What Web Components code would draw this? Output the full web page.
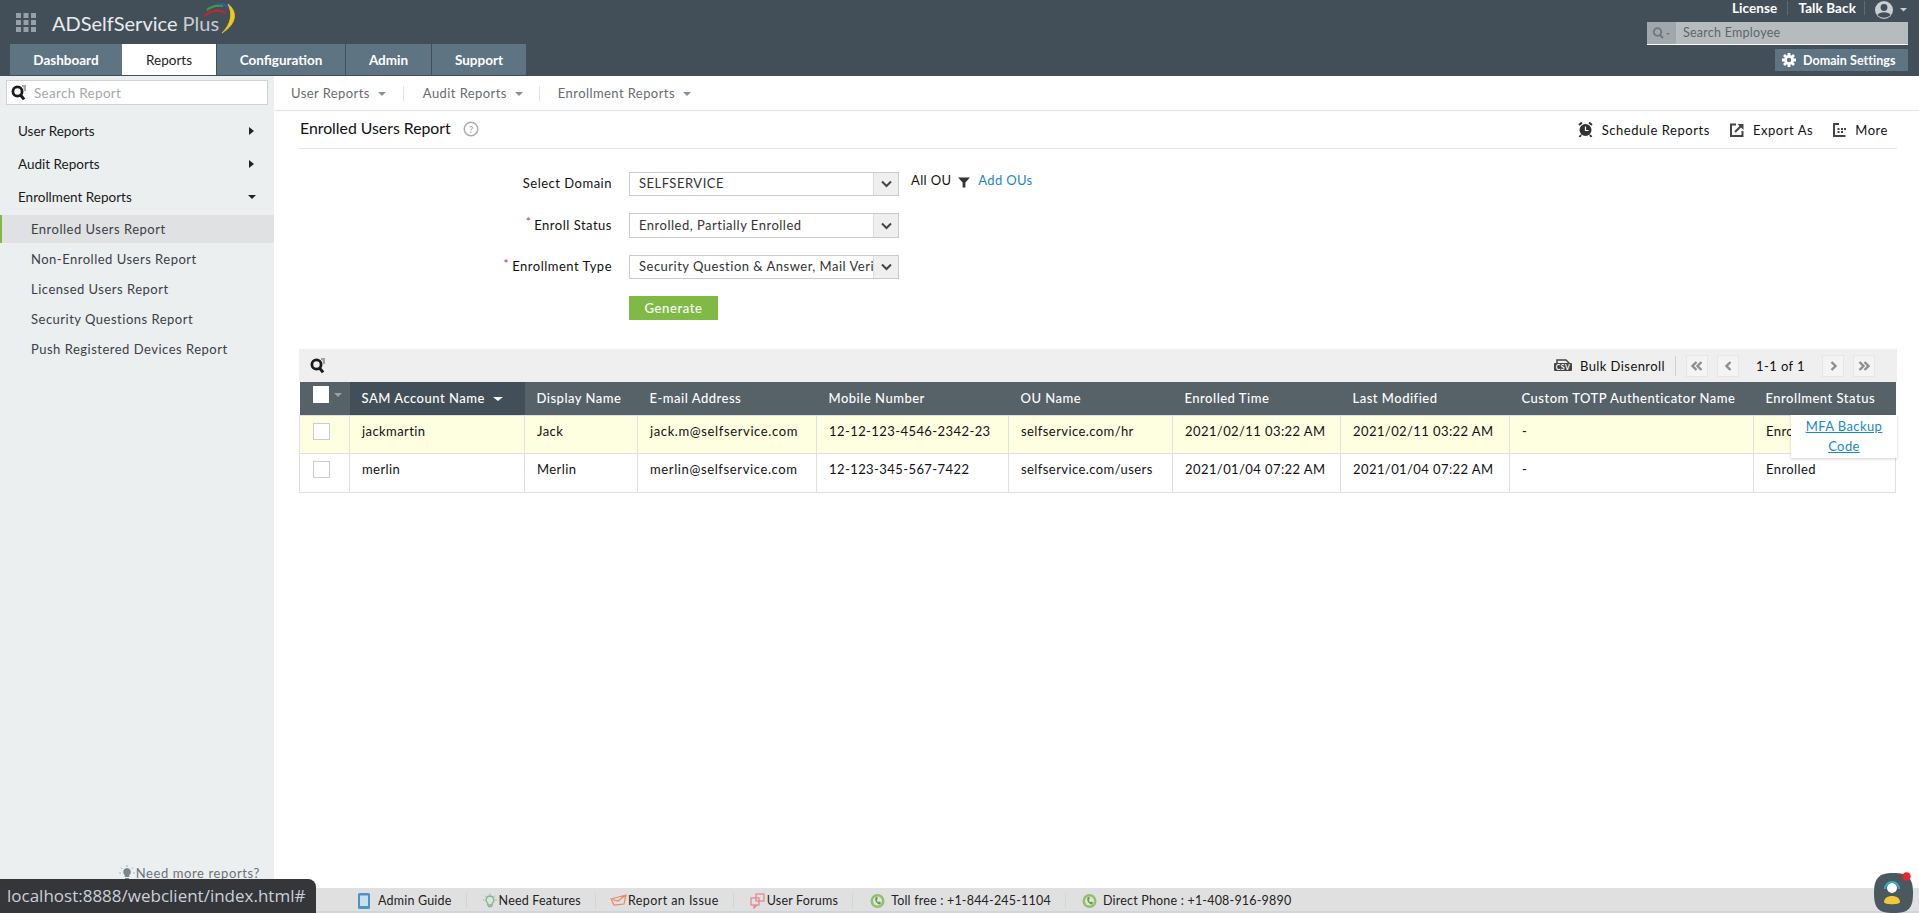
<!DOCTYPE html>
<html>
<head>
<meta charset="utf-8">
<title>ADSelfService Plus</title>
<style>
  html, body { margin: 0; height: 100%; overflow: hidden; background: #fff; }
  body { font: 13px Lato, "Liberation Sans", sans-serif; color: #111; }
  #app { display: flex; flex-direction: column; height: 913px; }
  #main { display: flex; flex: 1; min-height: 0; }
  #content { flex: 1; min-width: 0; }
</style>
</head>
<body>
<div id="app">
  <ad-header></ad-header>
  <div id="main">
    <ad-sidebar></ad-sidebar>
    <div id="content">
      <ad-subnav></ad-subnav>
      <ad-title></ad-title>
      <ad-form></ad-form>
      <ad-table></ad-table>
    </div>
  </div>
  <ad-footer></ad-footer>
</div>
<ad-statusbar>localhost:8888/webclient/index.html#</ad-statusbar>
<ad-chat></ad-chat>

<script>
const SEARCH_ICON = `<svg width="17" height="17" viewBox="0 0 17 17"><circle cx="6.5" cy="7.5" r="4.6" fill="none" stroke="#1b1b1b" stroke-width="2.8"/><path d="M9.5 11l3.6 4.4" stroke="#1b1b1b" stroke-width="3"/><path d="M11 2h4M12.500 4h2.500M13 6h2" stroke="#555" stroke-width="1"/></svg>`;

class AdHeader extends HTMLElement {
  constructor() {
    super();
    this.attachShadow({ mode: 'open' });
    const tabs = [['Dashboard', 112], ['Reports', 94, 1], ['Configuration', 128], ['Admin', 85], ['Support', 94]];
    this.shadowRoot.innerHTML = `
      <style>
        :host { display: flex; justify-content: space-between; height: 76px; background: #434f58; flex: none; }
        .left { display: flex; flex-direction: column; }
        .logo { height: 44px; display: flex; align-items: center; padding-left: 16px; position: relative; }
        .logo .name { font-size: 20px; color: #e8ecee; margin-left: 16px; margin-top: 2px; }
        .logo .name span { color: #c6ccd0; }
        .logo .arc { position: absolute; left: 204px; top: 3px; }
        .tabs { display: flex; gap: 1px; padding-left: 10px; }
        .tab { height: 31px; background: #5f7482; color: #fff; font-size: 13.5px; font-weight: 700; display: flex; align-items: center; justify-content: center; }
        .tab.on { background: #fff; color: #222; font-weight: 400; margin-left: -1px; }
        .right { display: flex; flex-direction: column; align-items: flex-end; padding-right: 11px; }
        .links { display: flex; align-items: center; height: 16px; margin-bottom: 6px; color: #fff; font-size: 13.5px; font-weight: 700; letter-spacing: .1px; }
        .links .sep { width: 1px; height: 14px; background: #5c6a74; margin: 0 10px; }
        .links svg { display: block; margin: 3px 0 0 9px; }
        .search { display: flex; width: 261px; height: 22px; background: #b6bbbe; border-bottom: 1px solid #fff; }
        .search .ic { width: 29px; background: #a0a8ae; display: flex; align-items: center; justify-content: center; }
        .search .txt { padding-left: 7px; color: #5d656b; font-size: 12.5px; letter-spacing: .25px; line-height: 22px; }
        .domain { display: flex; align-items: center; margin-top: 4px; width: 133px; height: 22px; box-sizing: border-box; padding-left: 7px; background: #5f7482; color: #fff; font-size: 12.5px; font-weight: 700; letter-spacing: .05px; }
        .domain svg { margin-right: 7px; }
      </style>
      <div class="left">
        <div class="logo">
          <svg width="20" height="19" viewBox="0 0 20 19" fill="#96a0a7"><rect width="5" height="5"/><rect x="7.5" width="5" height="5"/><rect x="15" width="5" height="5"/><rect y="7" width="5" height="5"/><rect x="7.5" y="7" width="5" height="5"/><rect x="15" y="7" width="5" height="5"/><rect y="14" width="5" height="5"/><rect x="7.500" y="14" width="5" height="5"/><rect x="15" y="14" width="5" height="5"/></svg>
          <div class="name">ADSelfService <span>Plus</span></div>
          <svg class="arc" width="33" height="31" viewBox="0 0 33 31" fill="none">
            <path d="M1 13C6 7 15 6 22 10" stroke="#c4262e" stroke-width="2.2"/>
            <path d="M3 7C8 3 14 2 19 3" stroke="#3f9a46" stroke-width="2.2"/>
            <path d="M13 1C19 0 25 3 28 9" stroke="#2b5ea8" stroke-width="2.2"/>
            <path d="M24 1C33 8 34 20 18 30C27 21 29 11 24 1Z" fill="#f1c916" stroke="#f1c916" stroke-width=".8"/>
          </svg>
        </div>
        <div class="tabs">
          ${tabs.map(t => `<div class="tab ${t[2] ? 'on' : ''}" style="width:${t[1]}px">${t[0]}</div>`).join('')}
        </div>
      </div>
      <div class="right">
        <div class="links">
          <span>License</span><span class="sep"></span><span>Talk Back</span><span class="sep" style="margin:0 0 0 8px"></span>
          <svg width="34" height="20" viewBox="0 0 34 20"><circle cx="10" cy="10" r="9" fill="#c9ced1"/><circle cx="10" cy="7.500" r="3.400" fill="#434f58"/><path d="M3.500 15c1.500-3.600 11.500-3.600 13 0-3 3.600-10 3.600-13 0z" fill="#434f58"/><path d="M26 8h7l-3.500 3.500z" fill="#c9ced1"/></svg>
        </div>
        <div class="search">
          <div class="ic"><svg width="19" height="12" viewBox="0 0 19 12"><circle cx="5.500" cy="5" r="3.800" fill="none" stroke="#6e777d" stroke-width="1.800"/><path d="M8 8l3 3" stroke="#6e777d" stroke-width="2"/><path d="M14 6h4l-2 2z" fill="#6e777d"/></svg></div>
          <div class="txt">Search Employee</div>
        </div>
        <div class="domain">
          <svg width="14" height="14" viewBox="0 0 14 14"><path d="M7 0v14M0 7h14M2 2l10 10M12 2L2 12" stroke="#fff" stroke-width="2.800"/><circle cx="7" cy="7" r="5" fill="#fff"/><circle cx="7" cy="7" r="2.200" fill="#5f7482"/></svg>
          Domain Settings
        </div>
      </div>`;
  }
}

class AdSidebar extends HTMLElement {
  constructor() {
    super();
    this.attachShadow({ mode: 'open' });
    this.shadowRoot.innerHTML = `
      <style>
        :host { display: flex; flex-direction: column; width: 274px; flex: none; background: #ebeff0; box-sizing: border-box; }
        .search { display: flex; align-items: center; height: 25px; box-sizing: border-box; margin: 4px 6px 9px 6px; background: #fff; border: 1px solid #cdd2d4; padding-left: 4px; color: #a4a8aa; font-size: 13.5px; letter-spacing: .3px; }
        .search svg { margin-right: 6px; }
        .head { height: 33px; display: flex; align-items: center; justify-content: space-between; padding: 0 20px 0 18px; font-size: 13.5px; color: #1a1a1a; }
        .head i { width: 0; height: 0; border-style: solid; }
        .head i.r { border-width: 4px 0 4px 5px; border-color: transparent transparent transparent #222; }
        .head i.d { border-width: 4px 4px 0 4px; border-color: #222 transparent transparent transparent; margin-right: -2px; }
        .sub { height: 30px; display: flex; align-items: center; padding-left: 31px; font-size: 13px; color: #3a4045; letter-spacing: .5px; }
        .sub.on { height: 28px; margin: 2px 0 1px; box-sizing: border-box; padding-bottom: 1px; background: #e0e1e3; border-left: 2px solid #7fba47; padding-left: 29px; }
        .more { margin-top: auto; padding: 0 14px 7px 0; display: flex; justify-content: flex-end; align-items: center; color: #6a7177; font-size: 13px; letter-spacing: .6px; }
      </style>
      <div class="search">${SEARCH_ICON}<span>Search Report</span></div>
      <div class="head">User Reports <i class="r"></i></div>
      <div class="head">Audit Reports <i class="r"></i></div>
      <div class="head">Enrollment Reports <i class="d"></i></div>
      <div class="sub on">Enrolled Users Report</div>
      <div class="sub">Non-Enrolled Users Report</div>
      <div class="sub">Licensed Users Report</div>
      <div class="sub">Security Questions Report</div>
      <div class="sub">Push Registered Devices Report</div>
      <div class="more">
        <svg width="16" height="16" viewBox="0 0 16 16" style="margin-right:1px"><path d="M8 3a4 4 0 0 1 2.300 7.200V12H5.700v-1.800A4 4 0 0 1 8 3z" fill="#7b858c"/><rect x="6" y="13" width="4" height="2" fill="#7b858c"/><path d="M8 0v2M2 2.500l1.500 1.500M14 2.500L12.500 4M0 8h2M14 8h2" stroke="#a7afb4"/></svg>
        Need more reports?
      </div>`;
  }
}

class AdSubnav extends HTMLElement {
  constructor() {
    super();
    this.attachShadow({ mode: 'open' });
    this.shadowRoot.innerHTML = `
      <style>
        :host { display: flex; align-items: center; height: 34px; padding-left: 17px; border-bottom: 1px solid #e3e6e8; color: #666c70; font-size: 13px; letter-spacing: .42px; }
        .it { display: flex; align-items: center; }
        .it i { margin-left: 8px; border-style: solid; border-width: 4px 4.5px 0; border-color: #8b9195 transparent transparent; margin-top: 1px; }
        .sep { width: 1px; height: 15px; background: #dfe2e4; margin: 0 19px 0 17px; }
        .sep.b { margin: 0 18px 0 16px; }
      </style>
      <div class="it">User Reports<i></i></div><div class="sep"></div>
      <div class="it">Audit Reports<i></i></div><div class="sep b"></div>
      <div class="it">Enrollment Reports<i></i></div>`;
  }
}

class AdTitle extends HTMLElement {
  constructor() {
    super();
    this.attachShadow({ mode: 'open' });
    this.shadowRoot.innerHTML = `
      <style>
        :host { display: flex; align-items: center; justify-content: space-between; height: 37px; margin: 0 22px 0 25px; border-bottom: 1px solid #e3e6e8; }
        .t { display: flex; align-items: center; font-size: 15.8px; color: #111; padding-bottom: 4px; padding-left: 1px; }
        .t svg { margin-left: 12px; margin-top: 3px; }
        .acts { display: flex; align-items: center; font-size: 13px; letter-spacing: .55px; padding-right: 9px; }
        .a { display: flex; align-items: center; margin-left: 20px; }
        .a svg { margin-right: 9px; }
      </style>
      <div class="t">Enrolled Users Report
        <svg width="16" height="16" viewBox="0 0 16 16"><circle cx="8" cy="8" r="6.800" fill="none" stroke="#a9adb0" stroke-width="1.500"/><text x="8" y="11.500" text-anchor="middle" font-size="10" font-family="Lato" font-weight="700" fill="#a9adb0">?</text></svg>
      </div>
      <div class="acts">
        <div class="a"><svg width="15" height="15" viewBox="0 0 15 15"><circle cx="7.500" cy="8" r="6" fill="#333"/><path d="M1 3l3-2.500M14 3L11 .5M3 13l-1.500 2M12 13l1.500 2" stroke="#333" stroke-width="2"/><path d="M7.500 4.500V8.500H10.500" fill="none" stroke="#fff" stroke-width="1.200"/></svg>Schedule Reports</div>
        <div class="a"><svg width="14" height="14" viewBox="0 0 14 14" fill="none"><path d="M6 1.500H1v11.500h11.500V8" stroke="#444" stroke-width="2"/><path d="M5 9l6-6" stroke="#444" stroke-width="2"/><path d="M7.500 1h6v6z" fill="#444"/></svg>Export As</div>
        <div class="a"><svg width="13" height="14" viewBox="0 0 13 14" fill="none"><path d="M6 1H1v12h11.500" stroke="#444" stroke-width="2"/><path d="M4.500 6h2M8 6h2M11 6h2M4.500 9h2M8 9h2" stroke="#444" stroke-width="1.800"/></svg>More</div>
      </div>`;
  }
}

class AdSelect extends HTMLElement {
  constructor() {
    super();
    this.attachShadow({ mode: 'open' });
    this.shadowRoot.innerHTML = `
      <style>
        :host { display: flex; width: 270px; height: 100%; box-sizing: border-box; border: 1px solid #cbcbcb; background: #fff; font-size: 13px; letter-spacing: .5px; color: #333; }
        .v { flex: 1; min-width: 0; padding: 0 3px 2px 9px; display: flex; align-items: center; white-space: nowrap; overflow: hidden; }
        .b { width: 24px; flex: none; background: #efefef; border-left: 1px solid #dcdcdc; display: flex; align-items: center; justify-content: center; }
      </style>
      <div class="v"><slot></slot></div>
      <div class="b"><svg width="11" height="8" viewBox="0 0 11 8" fill="none"><path d="M1 1.500l4.500 4.500L10 1.500" stroke="#444" stroke-width="2"/></svg></div>`;
  }
}

class AdForm extends HTMLElement {
  constructor() {
    super();
    this.attachShadow({ mode: 'open' });
    this.shadowRoot.innerHTML = `
      <style>
        :host { display: grid; grid-template-columns: 314px auto 1fr; grid-template-rows: 24px 25px 24px 24px; row-gap: 17px; column-gap: 16px; margin-left: 25px; padding-top: 23px; font-size: 13px; letter-spacing: .5px; }
        .l { display: flex; align-items: center; justify-content: flex-end; color: #111; padding-bottom: 2px; padding-right: 1px; }
        .l b { color: #e8203a; font-weight: 400; font-size: 12px; align-self: flex-start; margin-right: 3px; margin-top: 1px; }
        .ou { display: flex; align-items: flex-start; margin-left: -4px; color: #111; letter-spacing: .35px; }
        .ou a { color: #1a87c8; margin-left: 8px; }
        .ou svg { margin: 5px 0 0 7px; }
        .gen { width: 89px; background: #7fba47; color: #fff; display: flex; align-items: center; justify-content: center; font-weight: 500; letter-spacing: .6px; }
      </style>
      <div class="l">Select Domain</div><ad-select>SELFSERVICE</ad-select>
      <div class="ou">All OU <svg width="12" height="11" viewBox="0 0 13 11"><path d="M0 0h13L8 5.500V11H5V5.500z" fill="#333"/></svg><a>Add OUs</a></div>
      <div class="l"><b>*</b>Enroll Status</div><ad-select>Enrolled, Partially Enrolled</ad-select><div></div>
      <div class="l"><b>*</b>Enrollment Type</div><ad-select>Security Question &amp; Answer, Mail Verification</ad-select><div></div>
      <div></div><div class="gen">Generate</div><div></div>`;
  }
}

class AdTable extends HTMLElement {
  constructor() {
    super();
    this.attachShadow({ mode: 'open' });
    const widths = [50, 175, 113, 179, 192, 164, 168, 169, 244, 142];
    const heads = ['SAM Account Name', 'Display Name', 'E-mail Address', 'Mobile Number', 'OU Name', 'Enrolled Time', 'Last Modified', 'Custom TOTP Authenticator Name', 'Enrollment Status'];
    const rows = [
      ['jackmartin', 'Jack', 'jack.m@selfservice.com', '12-12-123-4546-2342-23', 'selfservice.com/hr', '2021/02/11 03:22 AM', '2021/02/11 03:22 AM', '-', 'Enrolled'],
      ['merlin', 'Merlin', 'merlin@selfservice.com', '12-123-345-567-7422', 'selfservice.com/users', '2021/01/04 07:22 AM', '2021/01/04 07:22 AM', '-', 'Enrolled']
    ];
    this.shadowRoot.innerHTML = `
      <style>
        :host { display: block; position: relative; margin: 29px 22px 0 25px; font-size: 13px; letter-spacing: .42px; }
        .bar { display: flex; align-items: center; height: 33px; background: #efefef; padding: 0 22px 0 11px; }
        .bar .sp { flex: 1; }
        .bar .sep { width: 1px; height: 20px; background: #d0d0d0; margin: 0 10px; }
        .pg { width: 20px; height: 20px; border: 1px solid #e6e6e6; background: #f4f4f4; display: flex; align-items: center; justify-content: center; }
        .count { width: 83px; text-align: center; }
        table { border-collapse: collapse; table-layout: fixed; width: 1596px; }
        th { height: 33px; padding: 0 0 1px 12px; box-sizing: border-box; background: #566168; color: #fff; font-weight: 500; letter-spacing: .5px; text-align: left; white-space: nowrap; }
        th.sort { background: #434f58; }
        th.sort i { display: inline-block; margin-left: 8px; vertical-align: 2px; border-style: solid; border-width: 4px 5px 0; border-color: #fff transparent transparent; }
        th.cb { padding: 0 0 0 13px; vertical-align: top; }
        td { height: 39px; padding: 7px 0 0 12px; box-sizing: border-box; vertical-align: top; border: 1px solid #e0e0e0; line-height: 16px; white-space: nowrap; overflow: hidden; color: #111; }
        td:nth-child(4) { letter-spacing: .62px; }
        tr.hl td { background: #fefee0; height: 38px; }
        td.cb { padding: 7px 0 0 13px; }
        .box { width: 17px; height: 17px; box-sizing: border-box; border: 1px solid #ccc; background: #fff; display: inline-block; }
        th .box { width: 16px; height: 17px; border: 0; margin-top: 4px; }
        th .caret { display: inline-block; vertical-align: top; margin: 11px 0 0 5px; border-style: solid; border-width: 4px 4px 0; border-color: #99a2a8 transparent transparent; }
        .pop { position: absolute; right: 0; top: 66px; width: 106px; height: 43px; box-sizing: border-box; background: #fff; box-shadow: 0 1px 3px rgba(0,0,0,.2); text-align: center; line-height: 20px; padding-top: 1px; color: #1a87c8; text-decoration: underline; }
      </style>
      <div class="bar">
        ${SEARCH_ICON}
        <div class="sp"></div>
        <svg width="18" height="15" viewBox="0 0 18 15" style="margin-right:8px"><path d="M3 6V2h9l3 3v1" fill="none" stroke="#444" stroke-width="1.500"/><rect x="0" y="5" width="18" height="8" rx="1" fill="#444"/><text x="9" y="12" text-anchor="middle" font-size="7" font-family="Lato" font-weight="700" fill="#fff">CSV</text></svg>
        <span>Bulk Disenroll</span><div class="sep"></div>
        <div class="pg" style="margin-right:9px"><svg width="12" height="10" viewBox="0 0 12 10" fill="none" stroke="#8e8e8e" stroke-width="2.400"><path d="M5.500 1L1.500 5l4 4M10.500 1l-4 4 4 4"/></svg></div>
        <div class="pg"><svg width="7" height="10" viewBox="0 0 7 10" fill="none" stroke="#8e8e8e" stroke-width="2.400"><path d="M5.500 1L1.500 5l4 4"/></svg></div>
        <div class="count">1-1 of 1</div>
        <div class="pg" style="margin-right:9px"><svg width="7" height="10" viewBox="0 0 7 10" fill="none" stroke="#8e8e8e" stroke-width="2.400"><path d="M1.500 1l4 4-4 4"/></svg></div>
        <div class="pg"><svg width="12" height="10" viewBox="0 0 12 10" fill="none" stroke="#8e8e8e" stroke-width="2.400"><path d="M1.500 1l4 4-4 4M6.500 1l4 4-4 4"/></svg></div>
      </div>
      <table>
        <colgroup>${widths.map(w => `<col style="width:${w}px">`).join('')}</colgroup>
        <thead><tr><th class="cb"><span class="box"></span><span class="caret"></span></th>
          ${heads.map((h, i) => i === 0 ? `<th class="sort">${h}<i></i></th>` : `<th>${h}</th>`).join('')}</tr></thead>
        <tbody>
          ${rows.map((r, i) => `<tr class="${i === 0 ? 'hl' : ''}"><td class="cb"><span class="box"></span></td>${r.map(c => `<td>${c}</td>`).join('')}</tr>`).join('')}
        </tbody>
      </table>
      <div class="pop">MFA Backup<br>Code</div>`;
  }
}

class AdFooter extends HTMLElement {
  constructor() {
    super();
    this.attachShadow({ mode: 'open' });
    const phone = `<svg width="15" height="16" viewBox="0 0 15 16"><circle cx="7.500" cy="8" r="7" fill="#8fc06a"/><circle cx="7.500" cy="8" r="4.500" fill="#e2e2e2"/><path d="M5.500 4.500c-1 3 1 6.500 4.500 7l1-2-2-1-.7.8c-1-.6-1.400-1.500-1.500-2.800l1-.5-.5-2.200z" fill="#5e9c3a"/></svg>`;
    this.shadowRoot.innerHTML = `
      <style>
        :host { display: flex; align-items: center; flex: none; height: 25px; padding: 0 0 0 358px; background: linear-gradient(#e0e0e0 23px, #ccd6dc 23px); font-size: 12.5px; letter-spacing: .2px; color: #222; box-sizing: border-box; }
        .f { display: flex; align-items: center; white-space: nowrap; }
        .sep { width: 1px; height: 15px; background: #d0d5d8; margin: 0 14px; }
      </style>
      <div class="f"><svg width="12" height="16" viewBox="0 0 12 16" style="margin-right:8px"><rect width="12" height="16" rx="1.500" fill="#4d93c6"/><rect x="2" y="2.500" width="8" height="10.500" fill="#c9dfee"/></svg>Admin Guide</div><div class="sep"></div>
      <div class="f" style="margin-left:2px"><svg width="14" height="16" viewBox="0 0 14 16" style="margin-right:2px"><path d="M7 3a4 4 0 0 1 2.300 7.200V12H4.700v-1.800A4 4 0 0 1 7 3z" fill="none" stroke="#7fba8f" stroke-width="1.300"/><path d="M5 13.500h4" stroke="#7fba8f" stroke-width="1.500"/><path d="M7 0v2M1.500 2.500L3 4M12.500 2.500L11 4M0 7h2M12 7h2" stroke="#9ccbaa"/></svg>Need Features</div><div class="sep"></div>
      <div class="f" style="margin-left:-1px;letter-spacing:.42px"><svg width="19" height="15" viewBox="0 0 19 15" fill="none" stroke="#e88a66" stroke-width="1.200"><path d="M2 6l15-4-2 9-10 1zM2 6l7 2 8-6"/></svg>Report an Issue</div><div class="sep"></div>
      <div class="f" style="margin-left:2px"><svg width="15" height="16" viewBox="0 0 15 16" style="margin-right:2px" fill="none" stroke="#e2848c" stroke-width="1.200"><rect x="6" y="1" width="8" height="7"/><rect x="1" y="5" width="8" height="7"/><path d="M4 12v3l3-3"/></svg>User Forums</div><div class="sep"></div>
      <div class="f" style="margin-left:3px">${phone}<span style="margin-left:6px">Toll free : +1-844-245-1104</span></div><div class="sep"></div>
      <div class="f" style="margin-left:2px">${phone}<span style="margin-left:6px">Direct Phone : +1-408-916-9890</span></div>`;
  }
}

class AdStatusbar extends HTMLElement {
  constructor() {
    super();
    this.attachShadow({ mode: 'open' });
    this.shadowRoot.innerHTML = `
      <style>
        :host { position: fixed; left: 0; bottom: 0; height: 34px; width: 316px; box-sizing: border-box; background: #35363a; border-top-right-radius: 8px; color: #c9d1d9; font: 17px "Open Sans", "Liberation Sans", sans-serif; line-height: 34px; padding-left: 7px; white-space: nowrap; }
      </style><slot></slot>`;
  }
}

class AdChat extends HTMLElement {
  constructor() {
    super();
    this.attachShadow({ mode: 'open' });
    this.shadowRoot.innerHTML = `
      <style>
        :host { position: fixed; right: 6px; bottom: 0; width: 39px; height: 41px; display: block; }
      </style>
      <svg width="39" height="41" viewBox="0 0 39 41">
        <path d="M19.500 1C34 1 39 6 39 21s-4 20-19.500 20S0 36 0 21 5 1 19.500 1z" fill="#4c5860"/>
        <circle cx="32.500" cy="4.500" r="4.200" fill="#e9242c"/>
        <circle cx="18" cy="16" r="5" fill="#fff"/>
        <path d="M11 17a7 7 0 0 1 14 0" fill="none" stroke="#2fb3c4" stroke-width="2"/>
        <path d="M10 30c0-8 16-8 16 0 0 3-16 3-16 0z" fill="#f0c93a"/>
      </svg>`;
  }
}

customElements.define('ad-header', AdHeader);
customElements.define('ad-sidebar', AdSidebar);
customElements.define('ad-subnav', AdSubnav);
customElements.define('ad-title', AdTitle);
customElements.define('ad-select', AdSelect);
customElements.define('ad-form', AdForm);
customElements.define('ad-table', AdTable);
customElements.define('ad-footer', AdFooter);
customElements.define('ad-statusbar', AdStatusbar);
customElements.define('ad-chat', AdChat);
</script>
</body>
</html>
